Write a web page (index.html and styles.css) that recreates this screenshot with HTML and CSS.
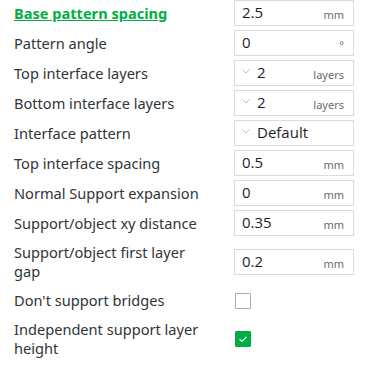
FILE: index.html
```html
<!DOCTYPE html>
<html lang="en">
<head>
    <meta charset="UTF-8">
    <meta name="viewport" content="width=device-width, initial-scale=1.0">
    <title>Support settings</title>
    <link rel="stylesheet" href="styles.css">
</head>
<body>
    <div class="settings">
        <div class="row">
            <span class="label label-active">Base pattern spacing</span>
            <div class="field"><span class="value">2.5</span><span class="unit">mm</span></div>
        </div>
        <div class="row">
            <span class="label">Pattern angle</span>
            <div class="field"><span class="value">0</span><span class="unit">°</span></div>
        </div>
        <div class="row">
            <span class="label">Top interface layers</span>
            <div class="field">
                <svg class="chevron" width="8" height="5" viewBox="0 0 8 5"><path d="M0.5 0.5 L4 4 L7.5 0.5" fill="none" stroke="#b5b5b5" stroke-width="0.9"/></svg>
                <span class="value">2</span><span class="unit">layers</span>
            </div>
        </div>
        <div class="row">
            <span class="label">Bottom interface layers</span>
            <div class="field">
                <svg class="chevron" width="8" height="5" viewBox="0 0 8 5"><path d="M0.5 0.5 L4 4 L7.5 0.5" fill="none" stroke="#b5b5b5" stroke-width="0.9"/></svg>
                <span class="value">2</span><span class="unit">layers</span>
            </div>
        </div>
        <div class="row">
            <span class="label">Interface pattern</span>
            <div class="field">
                <svg class="chevron" width="8" height="5" viewBox="0 0 8 5"><path d="M0.5 0.5 L4 4 L7.5 0.5" fill="none" stroke="#b5b5b5" stroke-width="0.9"/></svg>
                <span class="value">Default</span>
            </div>
        </div>
        <div class="row">
            <span class="label">Top interface spacing</span>
            <div class="field"><span class="value">0.5</span><span class="unit">mm</span></div>
        </div>
        <div class="row">
            <span class="label">Normal Support expansion</span>
            <div class="field"><span class="value">0</span><span class="unit">mm</span></div>
        </div>
        <div class="row">
            <span class="label">Support/object xy distance</span>
            <div class="field"><span class="value">0.35</span><span class="unit">mm</span></div>
        </div>
        <div class="row">
            <span class="label">Support/object first layer<br>gap</span>
            <div class="field"><span class="value">0.2</span><span class="unit">mm</span></div>
        </div>
        <div class="row">
            <span class="label">Don't support bridges</span>
            <div class="check-wrap"><span class="checkbox"></span></div>
        </div>
        <div class="row">
            <span class="label">Independent support layer<br>height</span>
            <div class="check-wrap">
                <span class="checkbox checked">
                    <svg width="16" height="16" viewBox="0 0 16 16"><path d="M4.5 8.2 L7 10.5 L11.5 5.8" fill="none" stroke="#fff" stroke-width="1.2"/></svg>
                </span>
            </div>
        </div>
    </div>
</body>
</html>
```

FILE: styles.css
```css
body {
    margin: 0;
    background-color: #fff;
    font-family: "Noto Sans", Arial, sans-serif;
    color: #2f3538;
}

.settings {
    display: flex;
    flex-direction: column;
    gap: 4px;
    padding-left: 14px;
}

.row {
    display: grid;
    grid-template-columns: 220px 120px;
    align-items: center;
}

.label {
    font-size: 14.6px;
    line-height: 19px;
    padding: 3px 0;
}

.label-active {
    color: #00ae42;
    font-weight: bold;
    text-decoration: underline;
}

.field {
    display: flex;
    align-items: center;
    height: 26px;
    box-sizing: border-box;
    border: 1px solid #dbdbdb;
    padding: 0 9px 0 7px;
}

.value {
    flex: 1;
    font-family: "Open Sans", Arial, sans-serif;
    font-size: 15px;
    line-height: 20px;
    margin-top: -3px;
    color: #1e1e1e;
}

.unit {
    font-size: 11px;
    color: #6b6b6b;
    margin-top: 3px;
}

.chevron {
    display: block;
    margin: -3px 7px 0 0;
}

.check-wrap {
    display: flex;
    padding-left: 1px;
}

.checkbox {
    width: 16px;
    height: 16px;
    box-sizing: border-box;
    border: 1px solid #adadad;
    border-radius: 1px;
}

.checkbox.checked {
    background-color: #00ae42;
    border-color: #00ae42;
}

.checkbox svg {
    display: block;
    margin: -1px;
}
```
